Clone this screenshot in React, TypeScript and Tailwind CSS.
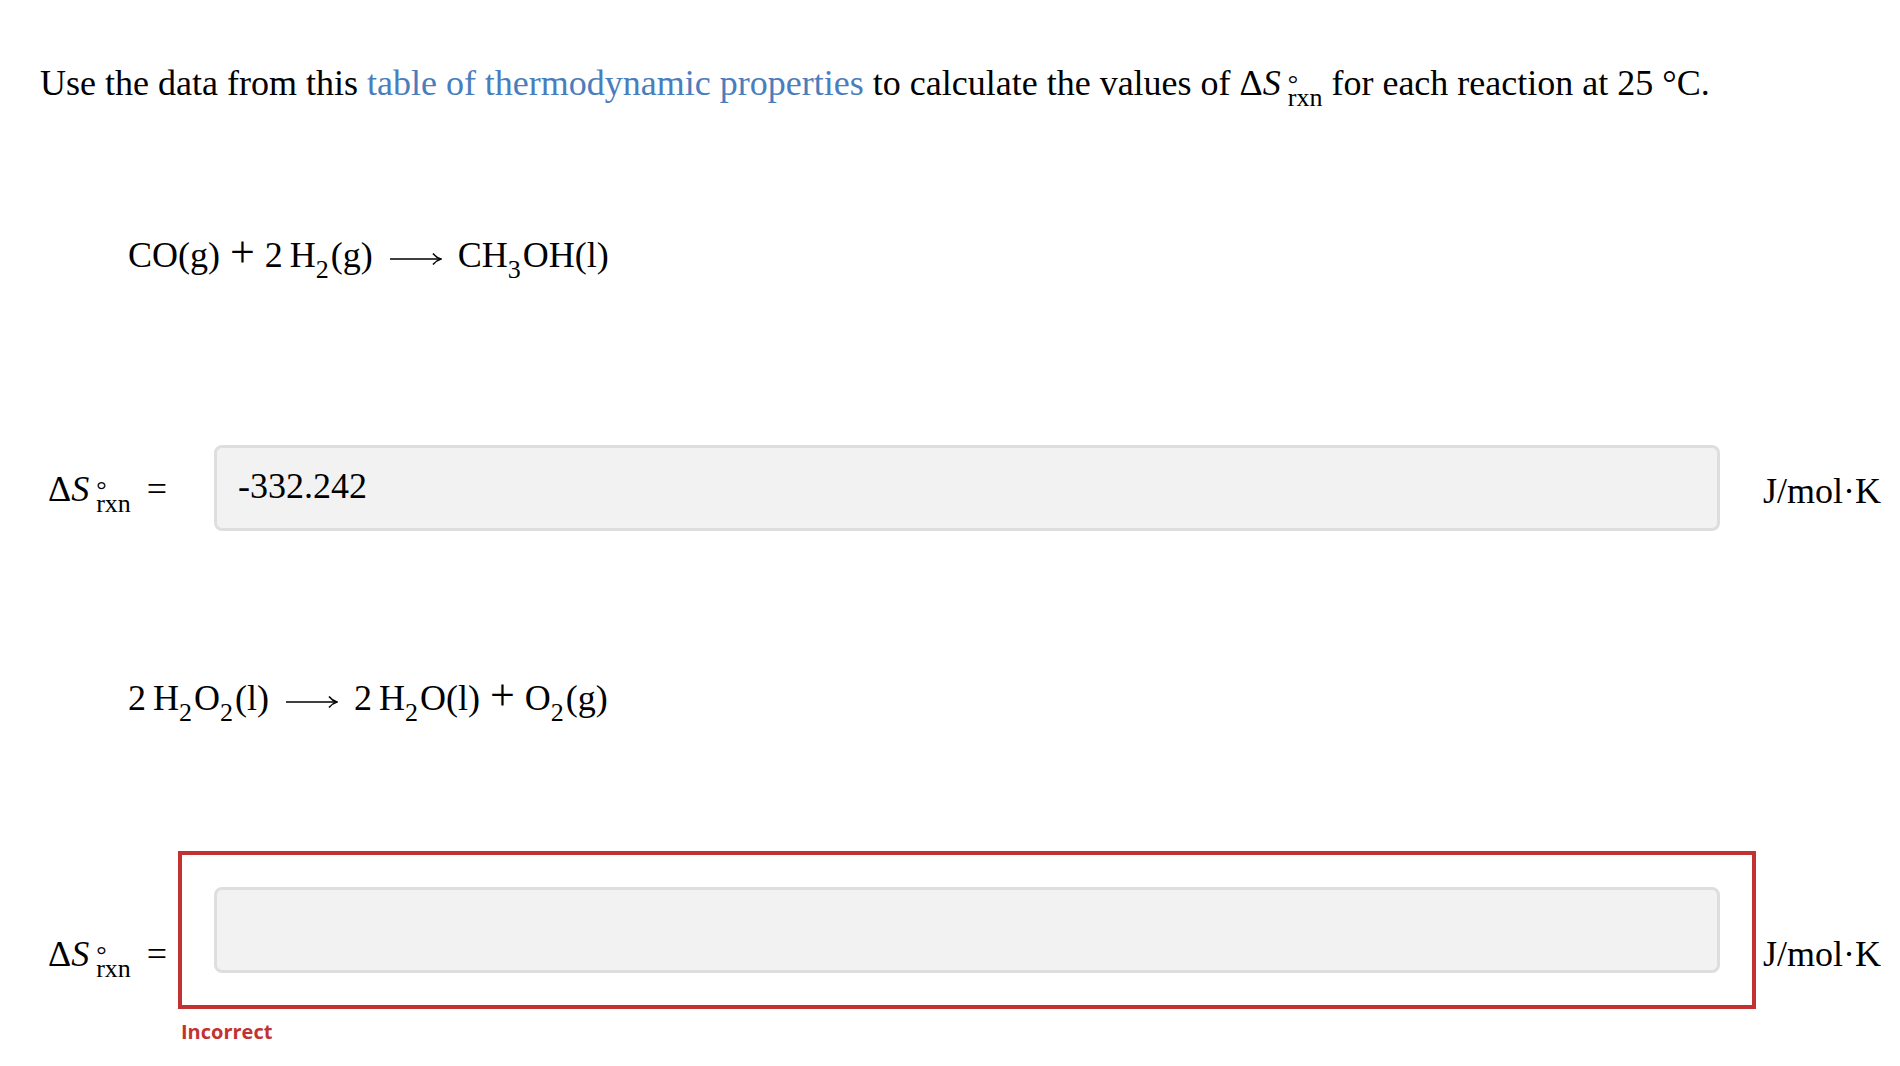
import type { ReactNode } from "react";

function Sub({ children }: { children: ReactNode }) {
  return (
    <span className="relative top-[11px] mr-[2px] text-[26px] leading-none">
      {children}
    </span>
  );
}

function DeltaS() {
  return (
    <span className="whitespace-nowrap">
      Δ<span className="italic">S</span>
      <span className="relative inline-block w-0">
        <span className="absolute bottom-[-2px] left-[7px] text-[26px] leading-[26px]">°</span>
      </span>
      <span className="relative top-[11px] ml-[7px] text-[26px] leading-none">rxn</span>
    </span>
  );
}

function Arrow() {
  return (
    <svg width="53" height="14" viewBox="0 0 53 14" className="mx-[16px] inline-block align-middle">
      <path d="M1 7 H51" stroke="black" strokeWidth="1.6" fill="none" />
      <path d="M44 1.5 Q47 5.5 52 7 Q47 8.5 44 12.5" stroke="black" strokeWidth="1.5" fill="none" />
    </svg>
  );
}

function Plus() {
  return <span className="mx-[10px] text-[44px] leading-[30px]">+</span>;
}

function Coef({ n }: { n: string }) {
  return (
    <>
      {n}
      <span className="ml-[7px]" />
    </>
  );
}

function AnswerRow({
  value,
  incorrect,
}: {
  value?: string;
  incorrect?: boolean;
}) {
  const labelTop = incorrect ? "mt-[85px]" : "mt-[62px]";
  const unitTop = incorrect ? "mt-[85px]" : "mt-[64px]";
  return (
    <div className="ml-[8px] flex items-start">
      <div className={`h-[36px] w-[130px] shrink-0 whitespace-nowrap ${labelTop}`}>
        <DeltaS />
        <span className="ml-[16px]">=</span>
      </div>
      <div className="flex w-[1578px] shrink-0 flex-col">
        <div
          className={`border-4 p-[32px] ${
            incorrect ? "border-[#c33232]" : "border-transparent"
          }`}
        >
          <div className="h-[86px] rounded-[8px] border-[3px] border-[#dedede] bg-[#f2f2f2] pl-[21px] pt-[20px]">
            {value}
          </div>
        </div>
        {incorrect ? (
          <p className="ml-[3px] mt-[13px] font-['Open_Sans',sans-serif] text-[20px] leading-[20px] font-bold text-[#c33232]">
            Incorrect
          </p>
        ) : null}
      </div>
      <div className={`ml-[7px] whitespace-nowrap ${unitTop}`}>J/mol·K</div>
    </div>
  );
}

export default function App() {
  return (
    <div className="min-h-screen bg-white px-[40px] pt-[65px] font-['Liberation_Serif',serif] text-[36px] leading-[36px] text-black">
      {/* prompt */}
      <p className="h-[36px] whitespace-nowrap">
        Use the data from this{" "}
        <a className="text-[#4a7dbc]">table of thermodynamic properties</a> to
        calculate the values of <DeltaS /> for each reaction at 25 °C.
      </p>

      {/* reaction 1 */}
      <div className="ml-[88px] mt-[136px] h-[36px] whitespace-nowrap">
        CO(g)
        <Plus />
        <Coef n="2" />H<Sub>2</Sub>(g)
        <Arrow />
        CH<Sub>3</Sub>OH(l)
      </div>

      <div className="mt-[136px]">
        <AnswerRow value="-332.242" />
      </div>

      {/* reaction 2 */}
      <div className="ml-[88px] mt-[113px] h-[36px] whitespace-nowrap">
        <Coef n="2" />H<Sub>2</Sub>O<Sub>2</Sub>(l)
        <Arrow />
        <Coef n="2" />H<Sub>2</Sub>O(l)
        <Plus />
        O<Sub>2</Sub>(g)
      </div>

      <div className="mt-[135px]">
        <AnswerRow incorrect />
      </div>
    </div>
  );
}
